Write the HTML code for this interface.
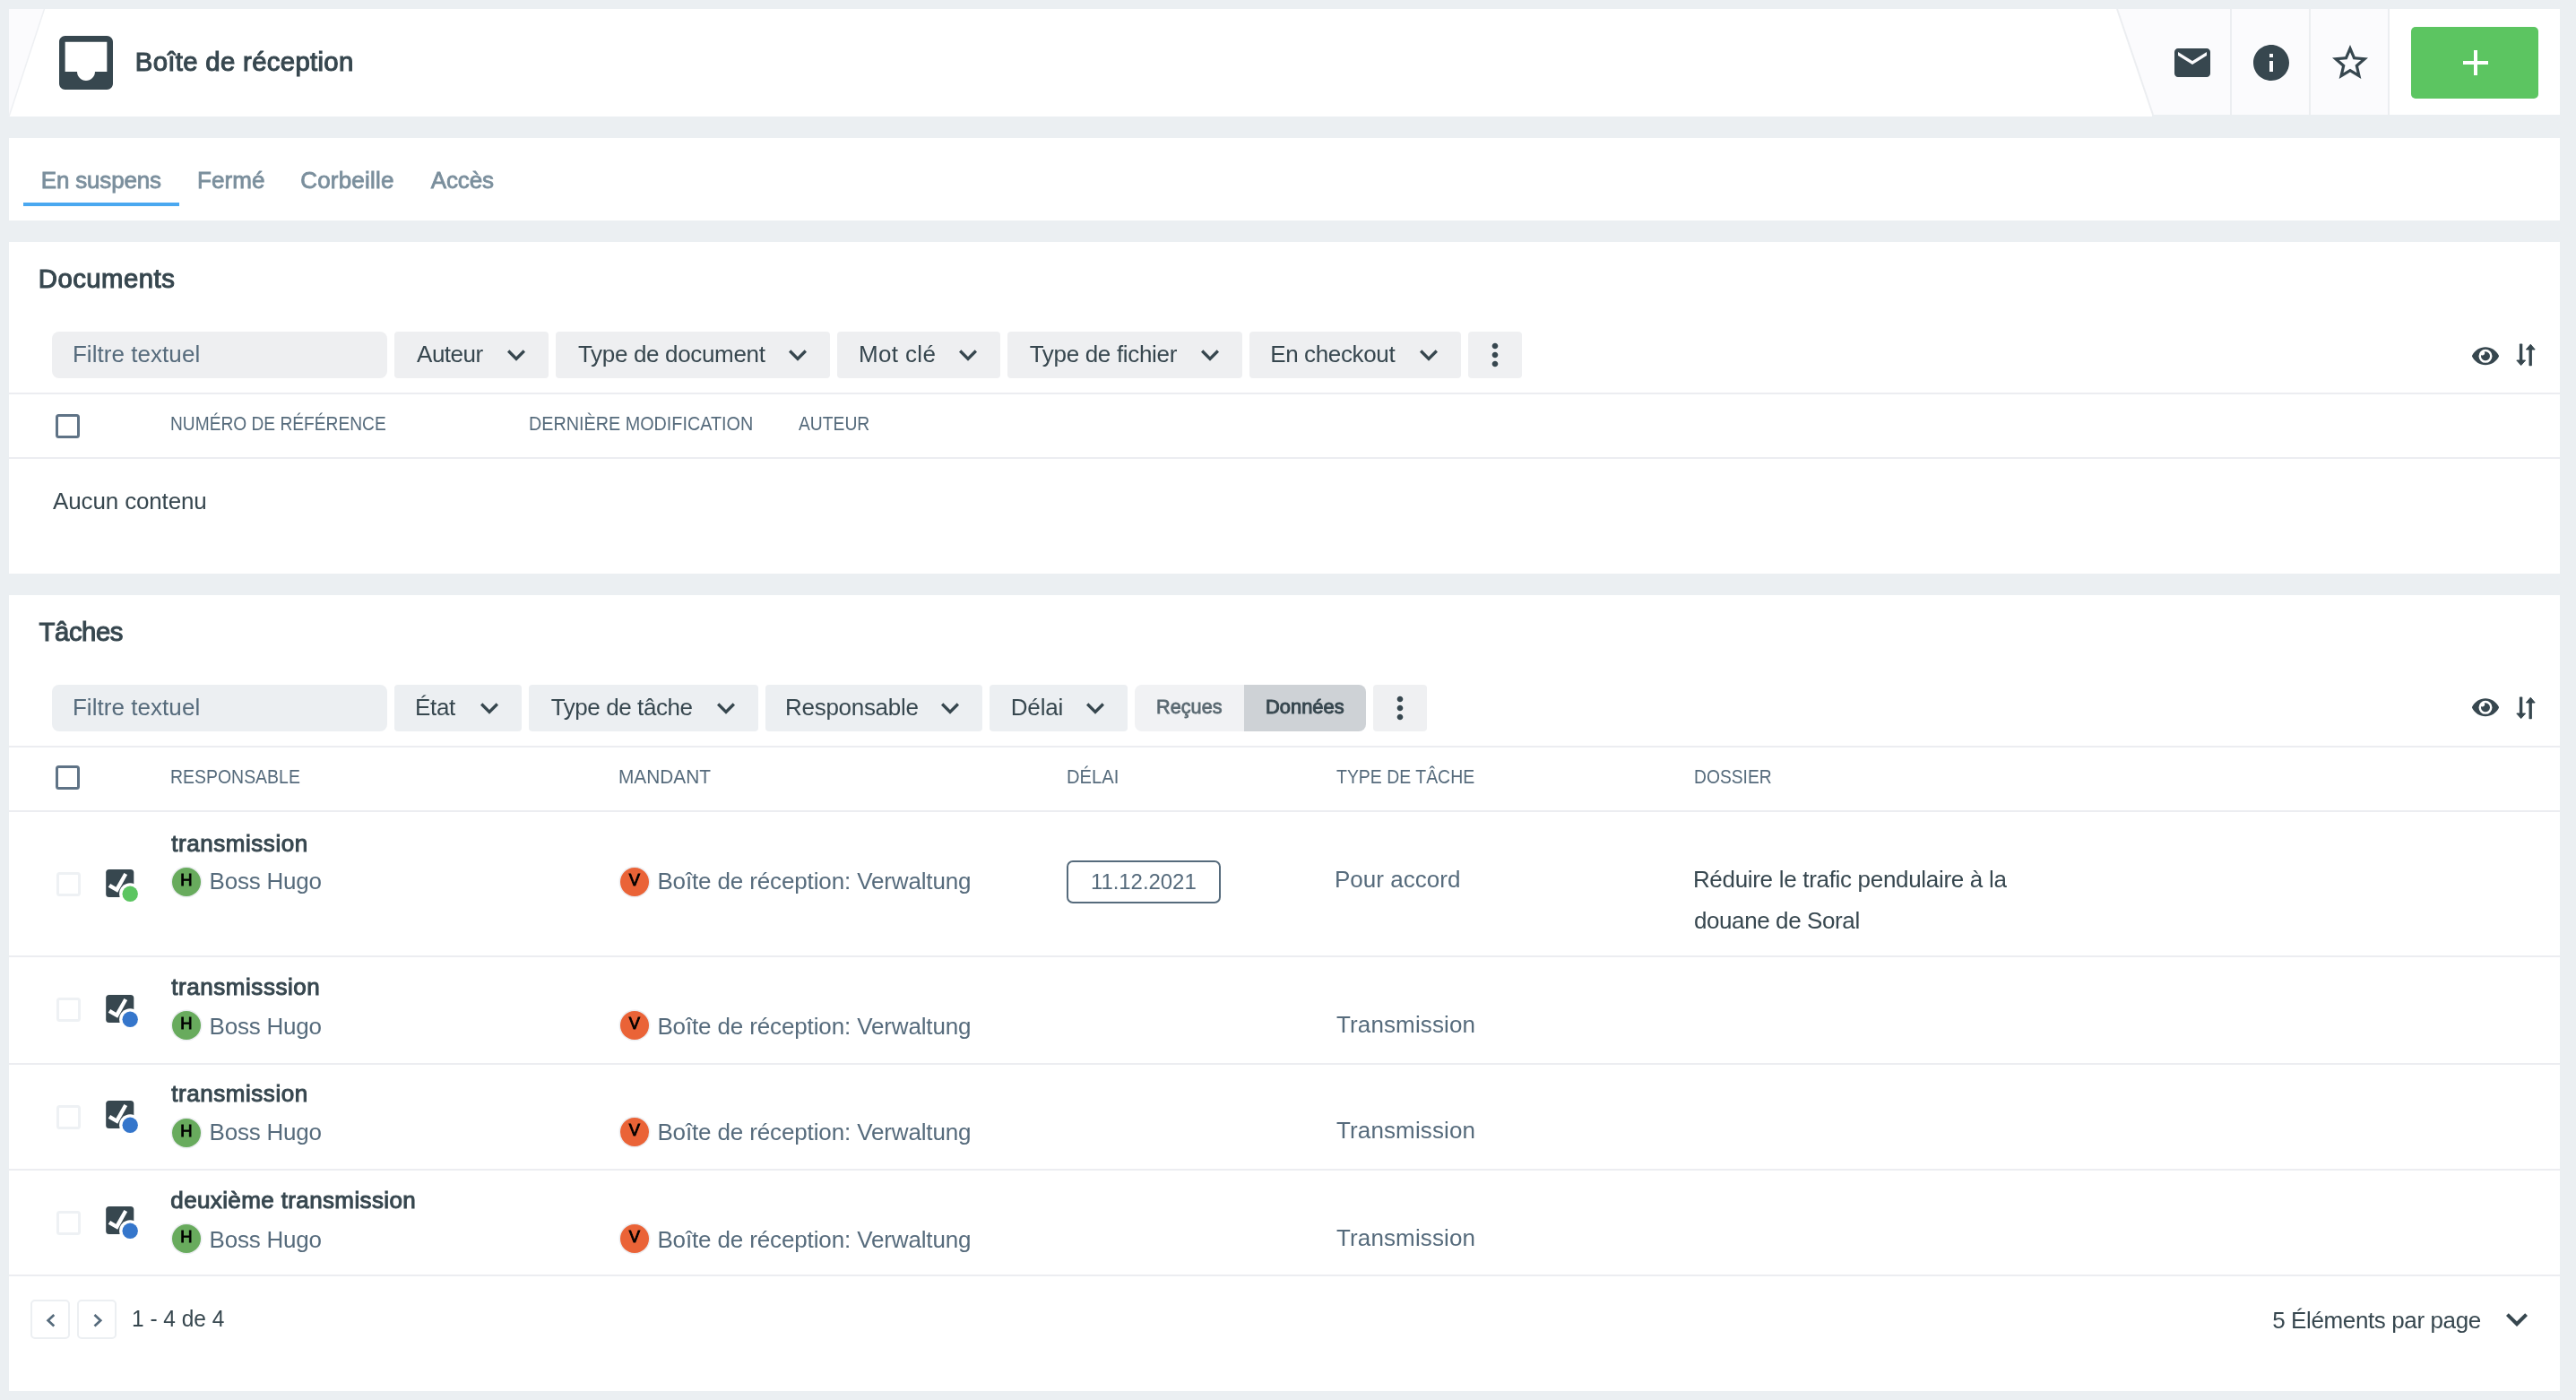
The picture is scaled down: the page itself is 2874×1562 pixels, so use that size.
<!DOCTYPE html>
<html lang="fr">
<head>
<meta charset="utf-8">
<title>Boîte de réception</title>
<style>
html,body{margin:0;padding:0}
body{width:2874px;height:1562px;background:#ebeff2;position:relative;overflow:hidden;font-family:"Liberation Sans", sans-serif;color:#37474f}
.p{position:absolute;background:#fff}
.a{position:absolute}
.t{position:absolute;white-space:nowrap;line-height:40px;height:40px;transform-origin:0 50%}
.m{font-weight:bold}
.s{-webkit-text-stroke:0.8px currentColor}
.s1{-webkit-text-stroke:1px currentColor}
.s2{-webkit-text-stroke:1.1px currentColor}
.b{font-weight:bold}
.f{position:absolute;background:#eeeff1;border-radius:4px;height:52px}
.ln{position:absolute;left:10px;width:2846px;height:2px;background:#ecedf1}
.cb{position:absolute;box-sizing:border-box;width:27px;height:27px;border:3px solid #5f7386;border-radius:3.5px;background:#fff}
.cbl{border-color:#eef1f4}
.av{position:absolute;width:32px;height:32px;border-radius:50%;box-shadow:0 0 0 1.5px #eceef1;color:#000;font-size:18.4px;line-height:27px;text-align:center;-webkit-text-stroke:0.9px #000}
.pg{position:absolute;box-sizing:border-box;width:44px;height:44px;border:2px solid #eceff2;border-radius:5px;background:#fff}
svg{position:absolute;display:block}
</style>
</head>
<body>
<div id="page" style="position:absolute;left:0;top:0;width:2874px;height:1562px;will-change:transform">
<div class="p" style="left:10px;top:10px;width:2846px;height:120px"></div>
<svg style="left:0;top:0" width="2874" height="140" viewBox="0 0 2874 140"><polygon points="10,10 49.5,10 10,130" fill="#fbfbfd"/><line x1="49.5" y1="10" x2="10" y2="130" stroke="#eef0f3" stroke-width="1.5"/><polygon points="2362,10 2665,10 2665,128 2402,128" fill="#fbfbfd"/><rect x="2401" y="128" width="455" height="2" fill="#ebeff2"/><line x1="2362" y1="10" x2="2402" y2="128" stroke="#eceef1" stroke-width="2"/><rect x="2488" y="10" width="2" height="118" fill="#eceef1"/><rect x="2576" y="10" width="2" height="118" fill="#eceef1"/><rect x="2664" y="10" width="2" height="118" fill="#eceef1"/></svg>
<svg style="left:56px;top:30px" width="80" height="80" viewBox="0 0 24 24" fill="#37474f"><path d="M19 3H4.99c-1.11 0-1.98.89-1.98 2L3 19c0 1.1.88 2 1.99 2H19c1.1 0 2-.9 2-2V5c0-1.11-.9-2-2-2zm0 12h-4c0 1.66-1.35 3-3 3s-3-1.34-3-3H4.99V5H19v10z"/></svg>
<svg style="left:2422px;top:46px" width="48" height="48" viewBox="0 0 24 24" fill="#37474f"><path d="M20 4H4c-1.1 0-1.99.9-1.99 2L2 18c0 1.1.9 2 2 2h16c1.1 0 2-.9 2-2V6c0-1.1-.9-2-2-2zm0 4l-8 5-8-5V6l8 5 8-5v2z"/></svg>
<svg style="left:2510px;top:46px" width="48" height="48" viewBox="0 0 24 24" fill="#37474f"><path d="M12 2C6.48 2 2 6.48 2 12s4.48 10 10 10 10-4.48 10-10S17.52 2 12 2zm1 15h-2v-6h2v6zm0-8h-2V7h2v2z"/></svg>
<svg style="left:2598px;top:46px" width="48" height="48" viewBox="0 0 24 24" fill="#37474f"><path d="M22 9.24l-7.19-.62L12 2 9.19 8.63 2 9.24l5.46 4.73L5.82 21 12 17.27 18.18 21l-1.63-7.03L22 9.24zM12 15.4l-3.76 2.27 1-4.28-3.32-2.88 4.38-.38L12 6.1l1.71 4.04 4.38.38-3.32 2.88 1 4.28L12 15.4z"/></svg>
<div class="a" style="left:2690px;top:30px;width:142px;height:80px;border-radius:5px;background:#5cc561"></div>
<svg style="left:2738px;top:46px" width="48" height="48" viewBox="0 0 24 24" fill="#fff"><path d="M19 13h-6v6h-2v-6H5v-2h6V5h2v6h6v2z"/></svg>
<div class="p" style="left:10px;top:154px;width:2846px;height:92px"></div>
<div class="a" style="left:26px;top:226px;width:174px;height:4px;background:#4aa8f0"></div>
<div class="p" style="left:10px;top:270px;width:2846px;height:370px"></div>
<div class="p" style="left:10px;top:664px;width:2846px;height:888px"></div>
<div class="f" style="left:58px;top:370px;width:374px;border-radius:8px"></div>
<div class="f" style="left:440px;top:370px;width:172px"></div>
<svg style="left:556.0px;top:376.1px" width="40" height="40" viewBox="0 0 24 24" fill="#37474f"><path d="M16.59 8.59L12 13.17 7.41 8.59 6 10l6 6 6-6z"/></svg>
<div class="f" style="left:620px;top:370px;width:306px"></div>
<svg style="left:870.0px;top:376.1px" width="40" height="40" viewBox="0 0 24 24" fill="#37474f"><path d="M16.59 8.59L12 13.17 7.41 8.59 6 10l6 6 6-6z"/></svg>
<div class="f" style="left:934px;top:370px;width:182px"></div>
<svg style="left:1060.0px;top:376.1px" width="40" height="40" viewBox="0 0 24 24" fill="#37474f"><path d="M16.59 8.59L12 13.17 7.41 8.59 6 10l6 6 6-6z"/></svg>
<div class="f" style="left:1124px;top:370px;width:262px"></div>
<svg style="left:1330.0px;top:376.1px" width="40" height="40" viewBox="0 0 24 24" fill="#37474f"><path d="M16.59 8.59L12 13.17 7.41 8.59 6 10l6 6 6-6z"/></svg>
<div class="f" style="left:1394px;top:370px;width:236px"></div>
<svg style="left:1574.0px;top:376.1px" width="40" height="40" viewBox="0 0 24 24" fill="#37474f"><path d="M16.59 8.59L12 13.17 7.41 8.59 6 10l6 6 6-6z"/></svg>
<div class="f" style="left:1638px;top:370px;width:60px;background:#eff0f2"></div>
<svg style="left:1648px;top:376px" width="40" height="40" viewBox="0 0 24 24" fill="#37474f"><path d="M12 8c1.1 0 2-.9 2-2s-.9-2-2-2-2 .9-2 2 .9 2 2 2zm0 2c-1.1 0-2 .9-2 2s.9 2 2 2 2-.9 2-2-.9-2-2-2zm0 6c-1.1 0-2 .9-2 2s.9 2 2 2 2-.9 2-2-.9-2-2-2z"/></svg>
<svg style="left:2758px;top:383.67px" width="30" height="26.67" viewBox="0 0 576 512" fill="#37474f"><path d="M572.52 241.4C518.29 135.59 410.93 64 288 64S57.68 135.64 3.48 241.41a32.35 32.35 0 0 0 0 29.19C57.71 376.41 165.07 448 288 448s230.32-71.64 284.52-177.41a32.35 32.35 0 0 0 0-29.19zM288 400a144 144 0 1 1 144-144 143.93 143.93 0 0 1-144 144zm0-240a95.31 95.31 0 0 0-25.31 3.790 47.85 47.85 0 0 1-66.9 66.9A95.78 95.78 0 1 0 288 160z"/></svg><svg style="left:2804px;top:380px" width="30" height="32" viewBox="0 0 30 32" fill="#37474f" stroke="#37474f" stroke-linejoin="round" stroke-width="1"><rect x="7.3" y="4" width="2.6" height="19" stroke="none"/><rect x="6.9" y="3.6" width="3.4" height="19" rx="0.6" stroke="none"/><polygon points="3.8,22 13.6,22 8.7,27.6"/><rect x="17.5" y="9.6" width="3.4" height="18.6" rx="0.6" stroke="none"/><polygon points="14.4,10 24.2,10 19.3,4.2"/></svg>
<div class="f" style="left:58px;top:764px;width:374px;border-radius:8px;background:#eceff2"></div>
<div class="f" style="left:440px;top:764px;width:142px;background:#eceff2"></div>
<svg style="left:526.0px;top:770.1px" width="40" height="40" viewBox="0 0 24 24" fill="#37474f"><path d="M16.59 8.59L12 13.17 7.41 8.59 6 10l6 6 6-6z"/></svg>
<div class="f" style="left:590px;top:764px;width:256px;background:#eceff2"></div>
<svg style="left:790.0px;top:770.1px" width="40" height="40" viewBox="0 0 24 24" fill="#37474f"><path d="M16.59 8.59L12 13.17 7.41 8.59 6 10l6 6 6-6z"/></svg>
<div class="f" style="left:854px;top:764px;width:242px;background:#eceff2"></div>
<svg style="left:1040.0px;top:770.1px" width="40" height="40" viewBox="0 0 24 24" fill="#37474f"><path d="M16.59 8.59L12 13.17 7.41 8.59 6 10l6 6 6-6z"/></svg>
<div class="f" style="left:1104px;top:764px;width:154px;background:#eceff2"></div>
<svg style="left:1202.0px;top:770.1px" width="40" height="40" viewBox="0 0 24 24" fill="#37474f"><path d="M16.59 8.59L12 13.17 7.41 8.59 6 10l6 6 6-6z"/></svg>
<div class="f" style="left:1532px;top:764px;width:60px;background:#eff0f2"></div>
<svg style="left:1542px;top:770px" width="40" height="40" viewBox="0 0 24 24" fill="#37474f"><path d="M12 8c1.1 0 2-.9 2-2s-.9-2-2-2-2 .9-2 2 .9 2 2 2zm0 2c-1.1 0-2 .9-2 2s.9 2 2 2 2-.9 2-2-.9-2-2-2zm0 6c-1.1 0-2 .9-2 2s.9 2 2 2 2-.9 2-2-.9-2-2-2z"/></svg>
<svg style="left:2758px;top:775.67px" width="30" height="26.67" viewBox="0 0 576 512" fill="#37474f"><path d="M572.52 241.4C518.29 135.59 410.93 64 288 64S57.68 135.64 3.48 241.41a32.35 32.35 0 0 0 0 29.19C57.71 376.41 165.07 448 288 448s230.32-71.64 284.52-177.41a32.35 32.35 0 0 0 0-29.19zM288 400a144 144 0 1 1 144-144 143.93 143.93 0 0 1-144 144zm0-240a95.31 95.31 0 0 0-25.31 3.790 47.85 47.85 0 0 1-66.9 66.9A95.78 95.78 0 1 0 288 160z"/></svg><svg style="left:2804px;top:774px" width="30" height="32" viewBox="0 0 30 32" fill="#37474f" stroke="#37474f" stroke-linejoin="round" stroke-width="1"><rect x="7.3" y="4" width="2.6" height="19" stroke="none"/><rect x="6.9" y="3.6" width="3.4" height="19" rx="0.6" stroke="none"/><polygon points="3.8,22 13.6,22 8.7,27.6"/><rect x="17.5" y="9.6" width="3.4" height="18.6" rx="0.6" stroke="none"/><polygon points="14.4,10 24.2,10 19.3,4.2"/></svg>
<div class="f" style="left:1266px;top:764px;width:122px;border-radius:8px 0 0 8px;background:#f1f2f4"></div>
<div class="f" style="left:1388px;top:764px;width:136px;border-radius:0 8px 8px 0;background:#ced2d6"></div>
<div class="ln" style="top:438px"></div>
<div class="ln" style="top:510px"></div>
<div class="ln" style="top:832px"></div>
<div class="ln" style="top:904px"></div>
<div class="ln" style="top:1066px"></div>
<div class="ln" style="top:1186px"></div>
<div class="ln" style="top:1304px"></div>
<div class="ln" style="top:1422px"></div>
<div class="cb" style="left:62px;top:462px"></div>
<div class="cb" style="left:62px;top:854px"></div>
<div class="cb cbl" style="left:62.5px;top:972.5px"></div>
<svg style="left:116px;top:968px" width="44" height="44" viewBox="0 0 44 44"><rect x="2.2" y="1.9" width="31.1" height="31.2" rx="3.6" fill="#37474f"/><polygon points="4.7,21.7 7.2,18.1 13.4,21.8 22.4,5.95 26.1,7.9 15.2,27.7" fill="#fff"/><circle cx="29.2" cy="29.3" r="12.1" fill="#fff"/><circle cx="29.2" cy="29.3" r="8.7" fill="#5cc561"/></svg>
<div class="av" style="left:192px;top:968px;background:#68ab5d">H</div>
<div class="av" style="left:692px;top:967.5px;background:#ea6337">V</div>
<div class="cb cbl" style="left:62.5px;top:1112.8px"></div>
<svg style="left:116px;top:1108px" width="44" height="44" viewBox="0 0 44 44"><rect x="2.2" y="1.9" width="31.1" height="31.2" rx="3.6" fill="#37474f"/><polygon points="4.7,21.7 7.2,18.1 13.4,21.8 22.4,5.95 26.1,7.9 15.2,27.7" fill="#fff"/><circle cx="29.2" cy="29.3" r="12.1" fill="#fff"/><circle cx="29.2" cy="29.3" r="8.7" fill="#3576cb"/></svg>
<div class="av" style="left:192px;top:1128px;background:#68ab5d">H</div>
<div class="av" style="left:692px;top:1127.5px;background:#ea6337">V</div>
<div class="cb cbl" style="left:62.5px;top:1232.5px"></div>
<svg style="left:116px;top:1226px" width="44" height="44" viewBox="0 0 44 44"><rect x="2.2" y="1.9" width="31.1" height="31.2" rx="3.6" fill="#37474f"/><polygon points="4.7,21.7 7.2,18.1 13.4,21.8 22.4,5.95 26.1,7.9 15.2,27.7" fill="#fff"/><circle cx="29.2" cy="29.3" r="12.1" fill="#fff"/><circle cx="29.2" cy="29.3" r="8.7" fill="#3576cb"/></svg>
<div class="av" style="left:192px;top:1247.5px;background:#68ab5d">H</div>
<div class="av" style="left:692px;top:1247.0px;background:#ea6337">V</div>
<div class="cb cbl" style="left:62.5px;top:1350.5px"></div>
<svg style="left:116px;top:1344px" width="44" height="44" viewBox="0 0 44 44"><rect x="2.2" y="1.9" width="31.1" height="31.2" rx="3.6" fill="#37474f"/><polygon points="4.7,21.7 7.2,18.1 13.4,21.8 22.4,5.95 26.1,7.9 15.2,27.7" fill="#fff"/><circle cx="29.2" cy="29.3" r="12.1" fill="#fff"/><circle cx="29.2" cy="29.3" r="8.7" fill="#3576cb"/></svg>
<div class="av" style="left:192px;top:1366px;background:#68ab5d">H</div>
<div class="av" style="left:692px;top:1365.5px;background:#ea6337">V</div>
<div class="a" style="left:1190px;top:960px;width:172px;height:48px;box-sizing:border-box;border:2px solid #566b7c;border-radius:7px"></div>
<div class="pg" style="left:34px;top:1450px"></div><div class="pg" style="left:86px;top:1450px"></div>
<svg style="left:34px;top:1450px" width="96" height="44" viewBox="0 0 96 44" fill="none" stroke="#566b7c" stroke-width="2.7"><polyline points="26.3,17 19.6,23.2 26.3,29.4"/><polyline points="71.5,17 78.2,23.2 71.5,29.4"/></svg>
<svg style="left:2784.0px;top:1448.0px" width="48" height="48" viewBox="0 0 24 24" fill="#37474f"><path d="M16.59 8.59L12 13.17 7.41 8.59 6 10l6 6 6-6z"/></svg>
<div class="t s2" style="left:150.85px;top:49.41px;font-size:29.3px;color:#37474f;letter-spacing:0.329px">Boîte de réception</div>
<div class="t s" style="left:45.80px;top:180.89px;font-size:26px;color:#7b8f9d;letter-spacing:-0.185px">En suspens</div>
<div class="t s" style="left:220.10px;top:180.89px;font-size:26px;color:#7b8f9d;letter-spacing:0.060px">Fermé</div>
<div class="t s" style="left:335.20px;top:180.89px;font-size:26px;color:#7b8f9d;letter-spacing:0.207px">Corbeille</div>
<div class="t s" style="left:480.80px;top:180.89px;font-size:26px;color:#7b8f9d;letter-spacing:-0.150px">Accès</div>
<div class="t s2" style="left:42.85px;top:291.31px;font-size:29.3px;color:#37474f;letter-spacing:0.472px">Documents</div>
<div class="t s2" style="left:43.55px;top:685.31px;font-size:29.3px;color:#37474f;letter-spacing:-0.425px">Tâches</div>
<div class="t" style="left:80.90px;top:375.49px;font-size:26px;color:#566b7c;letter-spacing:0.052px">Filtre textuel</div>
<div class="t" style="left:465.10px;top:375.49px;font-size:26px;color:#37474f;letter-spacing:-0.529px">Auteur</div>
<div class="t" style="left:645.00px;top:375.49px;font-size:26px;color:#37474f;letter-spacing:-0.333px">Type de document</div>
<div class="t" style="left:958.10px;top:375.49px;font-size:26px;color:#37474f;letter-spacing:0.326px">Mot clé</div>
<div class="t" style="left:1148.70px;top:375.49px;font-size:26px;color:#37474f;letter-spacing:-0.316px">Type de fichier</div>
<div class="t" style="left:1417.20px;top:375.49px;font-size:26px;color:#37474f;letter-spacing:-0.367px">En checkout</div>
<div class="t" style="left:190.36px;top:452.23px;font-size:22.7px;color:#566b7c;transform:scaleX(0.8448)">NUMÉRO DE RÉFÉRENCE</div>
<div class="t" style="left:590.03px;top:452.23px;font-size:22.7px;color:#566b7c;transform:scaleX(0.8718)">DERNIÈRE MODIFICATION</div>
<div class="t" style="left:890.90px;top:452.23px;font-size:22.7px;color:#566b7c;transform:scaleX(0.8494)">AUTEUR</div>
<div class="t" style="left:59.10px;top:538.99px;font-size:26px;color:#37474f;letter-spacing:-0.151px">Aucun contenu</div>
<div class="t" style="left:80.90px;top:769.49px;font-size:26px;color:#566b7c;letter-spacing:0.052px">Filtre textuel</div>
<div class="t" style="left:463.10px;top:769.49px;font-size:26px;color:#37474f;letter-spacing:-0.342px">État</div>
<div class="t" style="left:614.70px;top:769.49px;font-size:26px;color:#37474f;letter-spacing:-0.415px">Type de tâche</div>
<div class="t" style="left:876.10px;top:769.49px;font-size:26px;color:#37474f;letter-spacing:-0.301px">Responsable</div>
<div class="t" style="left:1127.70px;top:769.49px;font-size:26px;color:#37474f;letter-spacing:-0.143px">Délai</div>
<div class="t s" style="left:1289.85px;top:767.70px;font-size:22.8px;color:#5b6a72;transform:scaleX(0.9513)">Reçues</div>
<div class="t s1" style="left:1411.94px;top:767.67px;font-size:22.8px;color:#37474f;transform:scaleX(0.9604)">Données</div>
<div class="t" style="left:190.34px;top:846.03px;font-size:22.7px;color:#566b7c;transform:scaleX(0.8574)">RESPONSABLE</div>
<div class="t" style="left:690.28px;top:846.03px;font-size:22.7px;color:#566b7c;transform:scaleX(0.9181)">MANDANT</div>
<div class="t" style="left:1190.31px;top:846.03px;font-size:22.7px;color:#566b7c;transform:scaleX(0.8883)">DÉLAI</div>
<div class="t" style="left:1491.00px;top:846.03px;font-size:22.7px;color:#566b7c;transform:scaleX(0.8571)">TYPE DE TÂCHE</div>
<div class="t" style="left:1890.05px;top:846.03px;font-size:22.7px;color:#566b7c;transform:scaleX(0.8488)">DOSSIER</div>
<div class="t s1" style="left:191.30px;top:920.87px;font-size:26px;color:#37474f;letter-spacing:0.539px">transmission</div>
<div class="t" style="left:233.60px;top:962.99px;font-size:26px;color:#566b7c;letter-spacing:-0.215px">Boss Hugo</div>
<div class="t" style="left:733.40px;top:962.99px;font-size:26px;color:#566b7c;letter-spacing:-0.137px">Boîte de réception: Verwaltung</div>
<div class="t" style="left:1489.00px;top:960.99px;font-size:26px;color:#566b7c;letter-spacing:0.028px">Pour accord</div>
<div class="t s1" style="left:191.30px;top:1080.87px;font-size:26px;color:#37474f;letter-spacing:0.544px">transmisssion</div>
<div class="t" style="left:233.60px;top:1124.99px;font-size:26px;color:#566b7c;letter-spacing:-0.215px">Boss Hugo</div>
<div class="t" style="left:733.40px;top:1124.99px;font-size:26px;color:#566b7c;letter-spacing:-0.137px">Boîte de réception: Verwaltung</div>
<div class="t" style="left:1491.00px;top:1122.99px;font-size:26px;color:#566b7c;letter-spacing:0.121px">Transmission</div>
<div class="t s1" style="left:191.30px;top:1200.27px;font-size:26px;color:#37474f;letter-spacing:0.539px">transmission</div>
<div class="t" style="left:233.60px;top:1243.39px;font-size:26px;color:#566b7c;letter-spacing:-0.215px">Boss Hugo</div>
<div class="t" style="left:733.40px;top:1243.39px;font-size:26px;color:#566b7c;letter-spacing:-0.137px">Boîte de réception: Verwaltung</div>
<div class="t" style="left:1491.00px;top:1241.39px;font-size:26px;color:#566b7c;letter-spacing:0.121px">Transmission</div>
<div class="t s1" style="left:190.30px;top:1318.87px;font-size:26px;color:#37474f;letter-spacing:0.378px">deuxième transmission</div>
<div class="t" style="left:233.60px;top:1362.59px;font-size:26px;color:#566b7c;letter-spacing:-0.215px">Boss Hugo</div>
<div class="t" style="left:733.40px;top:1362.59px;font-size:26px;color:#566b7c;letter-spacing:-0.137px">Boîte de réception: Verwaltung</div>
<div class="t" style="left:1491.00px;top:1360.59px;font-size:26px;color:#566b7c;letter-spacing:0.121px">Transmission</div>
<div class="t" style="left:1216.90px;top:964.18px;font-size:24px;color:#566b7c;letter-spacing:-0.054px">11.12.2021</div>
<div class="t" style="left:1888.90px;top:960.79px;font-size:26px;color:#37474f;letter-spacing:-0.310px">Réduire le trafic pendulaire à la</div>
<div class="t" style="left:1889.90px;top:1006.79px;font-size:26px;color:#37474f;letter-spacing:-0.396px">douane de Soral</div>
<div class="t" style="left:146.96px;top:1450.69px;font-size:26px;color:#37474f;transform:scaleX(0.9410)">1 - 4 de 4</div>
<div class="t" style="left:2535.20px;top:1453.29px;font-size:26px;color:#37474f;letter-spacing:-0.382px">5 Éléments par page</div>
</div>
</body>
</html>
